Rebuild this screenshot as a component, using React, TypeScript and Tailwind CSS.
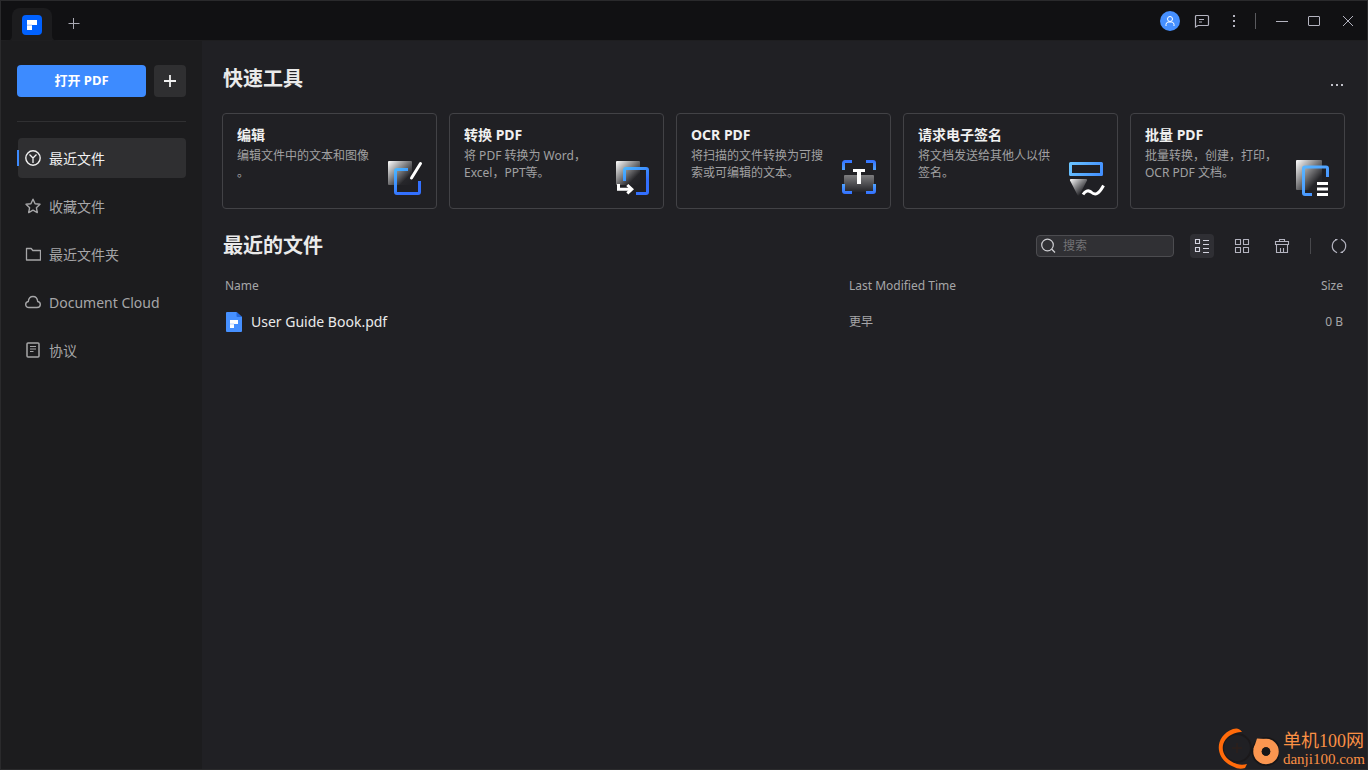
import React from "react";

type IconProps = { children: React.ReactNode; size?: number; className?: string };

function Line({ children, size = 16, className = "" }: IconProps) {
  return (
    <svg
      width={size}
      height={size}
      viewBox={`0 0 ${size} ${size}`}
      fill="none"
      stroke="currentColor"
      className={`shrink-0 ${className}`}
      aria-hidden="true"
    >
      {children}
    </svg>
  );
}

function Art({ children }: { children: React.ReactNode }) {
  return (
    <svg width="36" height="36" viewBox="0 0 36 36" fill="none" className="shrink-0" aria-hidden="true">
      {children}
    </svg>
  );
}

function Gradients() {
  return (
    <svg width="0" height="0" className="absolute" aria-hidden="true">
      <defs>
        <linearGradient id="shine" x1="0" y1="0" x2="1" y2="1">
          <stop offset="0" stopColor="#fff" />
          <stop offset="0.75" stopColor="#fff" stopOpacity="0.03" />
          <stop offset="1" stopColor="#fff" stopOpacity="0" />
        </linearGradient>
        <linearGradient id="fall" x1="0" y1="0" x2="0" y2="1">
          <stop offset="0" stopColor="#fff" stopOpacity="0.42" />
          <stop offset="1" stopColor="#fff" stopOpacity="0.02" />
        </linearGradient>
        <linearGradient id="blue" gradientUnits="userSpaceOnUse" x1="8" y1="6" x2="28" y2="34">
          <stop offset="0" stopColor="#4cbcff" />
          <stop offset="0.75" stopColor="#3370ff" />
        </linearGradient>
        <linearGradient id="sky" gradientUnits="userSpaceOnUse" x1="4" y1="2" x2="34" y2="34">
          <stop offset="0" stopColor="#5cbcff" />
          <stop offset="1" stopColor="#3f86ff" />
        </linearGradient>
        <linearGradient id="panel" gradientUnits="userSpaceOnUse" x1="0" y1="2" x2="34" y2="18">
          <stop offset="0" stopColor="#6cc6ff" />
          <stop offset="1" stopColor="#3f8bff" />
        </linearGradient>
        <linearGradient id="corner" gradientUnits="userSpaceOnUse" x1="0" y1="0" x2="0" y2="34">
          <stop offset="0" stopColor="#3370ff" />
          <stop offset="0.3" stopColor="#4fa4ff" />
          <stop offset="0.7" stopColor="#4fa4ff" />
          <stop offset="1" stopColor="#3370ff" />
        </linearGradient>
      </defs>
    </svg>
  );
}

const tools = [
  {
    title: "编辑",
    text: "编辑文件中的文本和图像\n。",
    art: (
      <Art>
        <rect x="0" y="1" width="24" height="24" rx="1" fill="url(#shine)" />
        <path d="M20 9.5H9a1.500 1.500 0 0 0-1.500 1.500V32a1.500 1.500 0 0 0 1.500 1.500h21a1.500 1.500 0 0 0 1.500-1.500V21" stroke="url(#blue)" strokeWidth="3" />
        <path d="M32.500 3.500L23.500 18" stroke="#fff" strokeWidth="3" strokeLinecap="round" />
      </Art>
    ),
  },
  {
    title: "转换 PDF",
    text: "将 PDF 转换为 Word，\nExcel，PPT等。",
    art: (
      <Art>
        <rect x="1" y="1" width="24" height="24" rx="1" fill="url(#shine)" />
        <path d="M9.500 21V10A1.500 1.500 0 0 1 11 8.500h20a1.500 1.500 0 0 1 1.500 1.500v22a1.500 1.500 0 0 1-1.500 1.500H21" stroke="url(#blue)" strokeWidth="3" />
        <path d="M3.500 24v5.200H16" stroke="#fff" strokeWidth="3" />
        <path d="M12.300 25l4.500 4.200-4.500 4.200" stroke="#fff" strokeWidth="3" />
      </Art>
    ),
  },
  {
    title: "OCR PDF",
    text: "将扫描的文件转换为可搜\n索或可编辑的文本。",
    art: (
      <Art>
        <rect x="2" y="15" width="30" height="17" rx="1" fill="url(#fall)" />
        <path d="M1.500 10V3A1.500 1.500 0 0 1 3 1.500h7M24 1.500h7A1.500 1.500 0 0 1 32.500 3v7M32.500 24v7a1.500 1.500 0 0 1-1.500 1.500h-7M10 32.500H3A1.500 1.500 0 0 1 1.500 31v-7" stroke="url(#corner)" strokeWidth="3" />
        <path d="M11 9h12v3h-4v12h-4V12h-4z" fill="#fff" />
      </Art>
    ),
  },
  {
    title: "请求电子签名",
    text: "将文档发送给其他人以供\n签名。",
    art: (
      <Art>
        <rect x="1.500" y="3.500" width="31" height="11" stroke="url(#panel)" strokeWidth="3" strokeLinejoin="round" />
        <path d="M2 19h15q1.500 0 1 1.500L10.500 35q-1 1.500-2 0L1 20.500Q.5 19 2 19z" fill="url(#shine)" />
        <path d="M14 34.500c2-3 5-5 8-2.500 2 1.800 3.500 3 6 1.500 3-1.600 4.500-4.500 6.500-8" stroke="#fff" strokeWidth="3" />
      </Art>
    ),
  },
  {
    title: "批量 PDF",
    text: "批量转换，创建，打印，\nOCR PDF 文档。",
    art: (
      <Art>
        <rect x="0" y="0" width="26" height="30" rx="1" fill="url(#shine)" />
        <path d="M31.500 17V8.500A1.500 1.500 0 0 0 30 7H9A1.500 1.500 0 0 0 7.500 8.500V33A1.500 1.500 0 0 0 9 34.500h7" stroke="url(#sky)" strokeWidth="3" />
        <path d="M21 23.500h11M21 29h11M21 34.500h11" stroke="#fff" strokeWidth="2.800" />
      </Art>
    ),
  },
];

const nav = [
  {
    label: "最近文件",
    icon: (
      <Line>
        <circle cx="8" cy="8" r="7.200" strokeWidth="1.400" />
        <path d="M4.500 4.500L8 8l3.500-3.500M8 8v5" strokeWidth="1.300" />
      </Line>
    ),
  },
  {
    label: "收藏文件",
    icon: (
      <Line>
        <path d="M8 1.200l2.100 4.500 4.900.6-3.600 3.400.9 4.900L8 12.200l-4.300 2.400.9-4.900L1 6.300l4.900-.6z" strokeWidth="1.400" strokeLinejoin="round" />
      </Line>
    ),
  },
  {
    label: "最近文件夹",
    icon: (
      <Line>
        <path d="M1.500 2.500h4.700l1.600 2h7.700v9.500h-14z" strokeWidth="1.300" strokeLinejoin="round" />
      </Line>
    ),
  },
  {
    label: "Document Cloud",
    icon: (
      <Line>
        <path d="M4 13.500C2 13.500.7 12.300.7 10.500c0-1.700 1-2.700 2.600-3C3.600 4.500 5.400 2.500 8 2.500s4.400 2 4.700 5c1.600.3 2.600 1.300 2.600 3 0 1.800-1.300 3-3.300 3z" strokeWidth="1.400" />
      </Line>
    ),
  },
  {
    label: "协议",
    icon: (
      <Line>
        <rect x="2" y="1" width="12" height="14" rx="1" strokeWidth="1.500" />
        <path d="M5 4.500h6M5 7h6M5 9.500h3.500" />
      </Line>
    ),
  },
];

function TitleBar() {
  return (
    <header className="flex h-10 shrink-0 items-end justify-between border-b border-[#1e1e20] bg-[#111113]">
      <div className="flex items-end">
        <div className="relative ml-[11px] flex h-8 w-10 items-center justify-center rounded-t-lg bg-[#1c1c1e] pt-0.5">
          <svg width="52" height="6" viewBox="0 0 52 6" className="absolute -bottom-px -left-1.5 max-w-none" aria-hidden="true">
            <path d="M0 6q6 0 6-6v6zM52 6q-6 0-6-6v6z" fill="#1c1c1e" />
          </svg>
          <a href="#home" aria-label="PDFelement">
            <svg width="20" height="20" viewBox="0 0 20 20" aria-hidden="true">
              <rect width="20" height="20" rx="4" fill="#0061ff" />
              <path d="M5 5h10v5H5z" fill="#fff" />
              <path d="M5 10h5v5H5z" fill="#fff" />
              <path d="M5 9.500h5V11H5z" fill="#b8d0ff" />
            </svg>
          </a>
        </div>
        <button type="button" aria-label="New tab" className="ml-4 flex h-8 w-3 items-center justify-center text-[#a9a9b3]">
          <Line size={12}>
            <path d="M.5 5.500h11M5.500 0v11" />
          </Line>
        </button>
      </div>
      <div className="flex h-10 items-center pr-[13px] pt-0.5 text-[#b4b4c0]">
        <button type="button" aria-label="Account" className="mr-3.5 flex size-5 items-center justify-center rounded-full bg-[#4690ff] text-white">
          <Line size={12}>
            <circle cx="6" cy="4" r="2.500" />
            <path d="M2 11V9.500q0-2 2-2.500h4q2 .5 2 2.500V11" />
          </Line>
        </button>
        <button type="button" aria-label="Feedback" className="mr-4">
          <Line>
            <path d="M1.500 14V3.500a1 1 0 0 1 1-1h11a1 1 0 0 1 1 1v8a1 1 0 0 1-1 1H4zM5 6.500h5M5 9h3" strokeWidth="1.200" />
          </Line>
        </button>
        <button type="button" aria-label="More" className="mr-[13px]">
          <Line>
            <path d="M7 3h2M7 8h2M7 13h2" strokeWidth="2" />
          </Line>
        </button>
        <span className="mr-5 h-4 w-px bg-[#5a5a5e]" />
        <button type="button" aria-label="Minimize" className="mr-5">
          <Line size={12}>
            <path d="M0 6.500h12" />
          </Line>
        </button>
        <button type="button" aria-label="Maximize" className="mr-[22px]">
          <Line size={12}>
            <rect x=".5" y="1.500" width="11" height="9" rx=".5" />
          </Line>
        </button>
        <button type="button" aria-label="Close">
          <Line size={12}>
            <path d="M1 1l10 10M11 1L1 11" />
          </Line>
        </button>
      </div>
    </header>
  );
}

function Sidebar() {
  return (
    <aside className="w-[201px] shrink-0 bg-[#1c1c1e] px-4 pt-6">
      <div className="flex gap-2 border-b border-[#303032] pb-6">
        <button type="button" className="h-8 flex-1 rounded bg-[#3d8bff] pb-0.5 text-[13px] font-bold leading-[30px] text-white">
          打开 PDF
        </button>
        <button type="button" aria-label="Create" className="flex size-8 items-center justify-center rounded bg-[#2f2f31] text-[#f0f0f0]">
          <Line size={12}>
            <path d="M0 6h12M6 0v12" strokeWidth="1.800" />
          </Line>
        </button>
      </div>
      <nav className="mt-4 flex flex-col gap-2">
        {nav.map((item, i) => (
          <a
            key={item.label}
            href={`#nav-${i}`}
            className={
              i === 0
                ? "relative ml-px flex h-10 items-center gap-2 rounded bg-[#2f2f31] pl-[7px] text-[14px] leading-5 text-[#f0f0f0]"
                : "flex h-10 items-center gap-2 rounded pl-2 text-[14px] leading-5 text-[#a6a6a8]"
            }
          >
            {i === 0 && <span className="absolute -left-px top-3 h-4 w-0.5 bg-[#3d8bff]" />}
            {item.icon}
            <span className="pt-0.5">{item.label}</span>
          </a>
        ))}
      </nav>
    </aside>
  );
}

function Toolbar() {
  return (
    <div className="-mr-1.5 flex items-center text-[#b4b4c0]">
      <label className="flex h-[22px] w-[138px] items-center gap-1.5 rounded border border-[#4c4c50] bg-[#303034] px-1 text-[#d0d0d4]">
        <Line>
          <circle cx="6.500" cy="7" r="5.800" strokeWidth="1.200" />
          <path d="M10.800 11.300l3.200 3.200" strokeWidth="1.300" />
        </Line>
        <input
          type="text"
          aria-label="搜索"
          placeholder="搜索"
          className="w-full min-w-0 bg-transparent text-[12px] leading-4 outline-none placeholder:text-[#737376]"
        />
      </label>
      <button type="button" aria-label="List view" className="ml-4 flex size-6 items-center justify-center rounded bg-[#2f2f34] text-[#d4d4e0]">
        <Line>
          <path d="M1.500 1.500h4v4h-4zM1.500 9.500h4v4h-4zM9 2.500h6M9 6.500h6M9 10.500h6M9 14.500h6" strokeWidth="1.100" />
        </Line>
      </button>
      <button type="button" aria-label="Grid view" className="ml-4 flex size-6 items-center justify-center">
        <Line>
          <path d="M1.500 1.500h5v5h-5zM1.500 9.500h5v5h-5zM9.500 1.500h5v5h-5zM9.500 9.500h5v5h-5z" strokeWidth="1.100" strokeLinejoin="round" />
        </Line>
      </button>
      <button type="button" aria-label="Clear list" className="ml-4 flex size-6 items-center justify-center">
        <Line>
          <path d="M5.500 3.500v-2h5v2M1.500 3.500h13v3h-13zM2.500 6.500v8h11v-8M6.500 14v-4M9.500 14v-4" strokeWidth="1.100" />
        </Line>
      </button>
      <span className="ml-4 h-4 w-px bg-[#48484c]" />
      <button type="button" aria-label="Refresh" className="ml-4 flex size-6 items-center justify-center">
        <Line>
          <path d="M6.300 1.500A6.700 6.700 0 0 0 4.500 13.700M9.700 14.500A6.700 6.700 0 0 0 11.500 2.300M4 1.500h2.500M9.500 14.500H12M4.500 13.700l1.500 1M11.500 2.300L10 1.300" strokeWidth="1.200" />
        </Line>
      </button>
    </div>
  );
}

function FileTable() {
  return (
    <table className="mt-3 w-full table-fixed text-left text-[12px] leading-5 text-[#a6a6a8]">
      <thead>
        <tr className="h-6">
          <th className="pl-[3px] font-normal">Name</th>
          <th className="w-[375px] font-normal">Last Modified Time</th>
          <th className="w-[121px] pr-0.5 text-right font-normal">Size</th>
        </tr>
      </thead>
      <tbody>
        <tr className="h-12">
          <td className="pl-1">
            <a href="#user-guide" className="flex items-center gap-2 text-[14px] text-[#eaeaea]">
              <svg width="17" height="20" viewBox="0 0 17 20" className="shrink-0" aria-hidden="true">
                <path d="M0 1q0-1 1-1h9.500L16 5v14q0 1-1 1H1q-1 0-1-1z" fill="#4690ff" />
                <path d="M10.500 0v4q0 1 1 1H16z" fill="#2469dd" />
                <path d="M4 8h8v4H8v4H4z" fill="#fff" />
                <path d="M4 11.500h4v1H4z" fill="#b8d4ff" />
              </svg>
              User Guide Book.pdf
            </a>
          </td>
          <td>更早</td>
          <td className="pr-0.5 text-right">0 B</td>
        </tr>
      </tbody>
    </table>
  );
}

function Watermark() {
  return (
    <div className="pointer-events-none absolute bottom-0 right-0 flex items-end gap-1 pr-0.5 text-[#fb9044]">
      <svg width="62" height="44" viewBox="0 0 62 44" aria-hidden="true">
        <circle cx="20" cy="23" r="14" fill="none" stroke="#1b191b" strokeWidth="2" />
        <path d="M20 18v10M15 23h10" stroke="#2c1f1b" strokeWidth="1.500" />
        <path d="M25 7Q22 2 16 4C-3 11-3 34 16 41.500Q22 45 28 43l2-4q-5 1.500-10 0C1 33 2 14 17 8.500q4-2 8-1.500z" fill="#ff6a0a" />
        <circle cx="49" cy="26.500" r="14.500" fill="#171618" />
        <circle cx="49" cy="26.500" r="8.500" fill="none" stroke="#fb9650" strokeWidth="8.500" />
        <path d="M36.500 24L40 13.500l9 .5z" fill="#fb9650" />
        <circle cx="49" cy="26.500" r="4.300" fill="#171618" />
      </svg>
      <div className="font-['Liberation_Serif','Noto_Sans_CJK_SC',serif]">
        <div className="text-[18px] leading-5">单机100网</div>
        <div className="pb-0.5 text-[15px] leading-4">danji100.com</div>
      </div>
    </div>
  );
}

export default function App() {
  return (
    <div
      lang="zh-CN"
      className="relative flex min-h-screen flex-col border border-[#2a2a2c] bg-[#202024] font-['Noto_Sans','Noto_Sans_CJK_SC',sans-serif]"
    >
      <Gradients />
      <TitleBar />
      <div className="flex flex-1">
        <Sidebar />
        <main className="min-w-0 flex-1 pl-5 pr-[22px] pt-6">
          <div className="flex items-center justify-between pl-px text-[#eaeaea]">
            <h1 className="text-[20px] font-bold leading-7">快速工具</h1>
            <button type="button" aria-label="More tools" className="mt-3 text-[#c0c0c8]">
              <Line>
                <path d="M2 8h2M7 8h2M12 8h2" strokeWidth="2" />
              </Line>
            </button>
          </div>
          <section className="mt-5 grid grid-cols-5 gap-3">
            {tools.map((tool) => (
              <a
                key={tool.title}
                href="#tool"
                className="flex h-24 items-end justify-between rounded border border-[#424246] pb-3 pl-3.5 pr-3 hover:bg-[#29292d]"
              >
                <div className="self-start pt-3">
                  <h2 className="text-[14px] font-bold leading-[18px] text-[#f0f0f0]">{tool.title}</h2>
                  <p className="mt-[3px] whitespace-pre text-[12px] leading-[17px] text-[#a0a0a2]">{tool.text}</p>
                </div>
                {tool.art}
              </a>
            ))}
          </section>
          <div className="mt-[21px] flex items-center justify-between pl-px">
            <h1 className="text-[20px] font-bold leading-8 text-[#eaeaea]">最近的文件</h1>
            <Toolbar />
          </div>
          <FileTable />
        </main>
      </div>
      <Watermark />
    </div>
  );
}
